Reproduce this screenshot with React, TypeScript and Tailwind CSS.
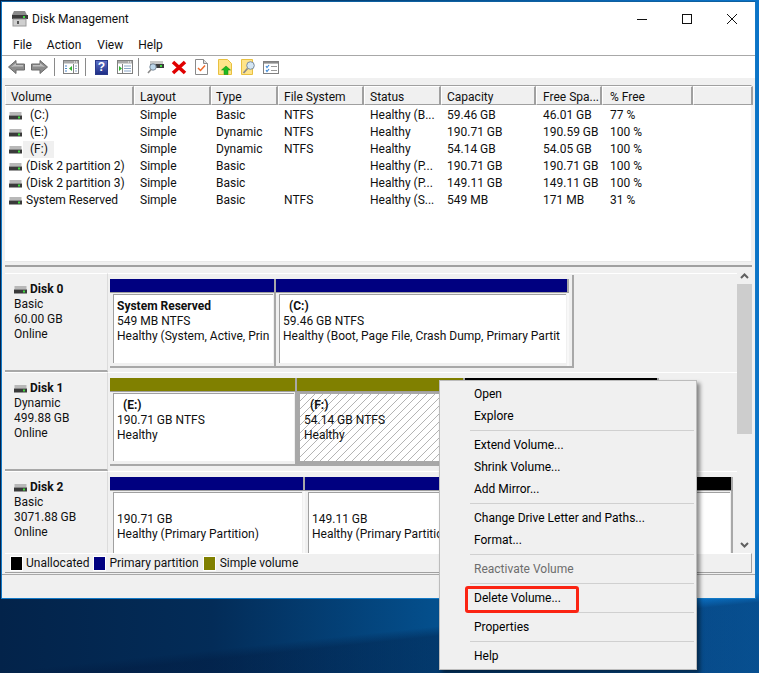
import React from "react";

const cols: [string, number, number][] = [
  ["Volume", 129, 5],
  ["Layout", 77, 5],
  ["Type", 67, 4],
  ["File System", 86, 5],
  ["Status", 77, 5],
  ["Capacity", 95, 5],
  ["Free Spa...", 66, 6],
  ["% Free", 91, 7],
  ["", 60, 5],
];

const rows = [
  [" (C:)", "Simple", "Basic", "NTFS", "Healthy (B...", "59.46 GB", "46.01 GB", "77 %"],
  [" (E:)", "Simple", "Dynamic", "NTFS", "Healthy", "190.71 GB", "190.59 GB", "100 %"],
  [" (F:)", "Simple", "Dynamic", "NTFS", "Healthy", "54.14 GB", "54.05 GB", "100 %"],
  ["(Disk 2 partition 2)", "Simple", "Basic", "", "Healthy (P...", "190.71 GB", "190.71 GB", "100 %"],
  ["(Disk 2 partition 3)", "Simple", "Basic", "", "Healthy (P...", "149.11 GB", "149.11 GB", "100 %"],
  ["System Reserved", "Simple", "Basic", "NTFS", "Healthy (S...", "549 MB", "171 MB", "31 %"],
];

function Drive({ className = "" }: { className?: string }) {
  return (
    <svg width="13" height="8" viewBox="0 0 13 8" className={className}>
      <rect x="0.5" y="0" width="12" height="3.5" fill="#b8b8b8" />
      <rect x="0" y="3.5" width="13" height="4" fill="#3a3a3a" />
      <rect x="9" y="4.5" width="2" height="2" fill="#3fdc3f" />
    </svg>
  );
}

function Sep() {
  return <div className="w-px h-[18px] bg-[#8a8a8a]" />;
}

function Arrow({ flip }: { flip?: boolean }) {
  return (
    <svg width="17" height="14" viewBox="0 0 17 14" className={flip ? "-scale-x-100" : ""}>
      <path d="M0.5 7 L8 0.5 V4 H16.5 V10 H8 V13.5 Z" fill="#8c8c8c" stroke="#6a6a6a" strokeWidth="1" />
      <path d="M3 7 L8 3 V5 H15 V6.5 H6 Z" fill="#c0c0c0" />
    </svg>
  );
}

function PaneIcon({ right }: { right?: boolean }) {
  return (
    <svg width="16" height="14" viewBox="0 0 16 14">
      <rect x="0.5" y="0.5" width="15" height="13" fill="#fff" stroke="#808080" />
      <rect x="1" y="1" width="14" height="2.5" fill="#a8a8a8" />
      <rect x="11" y="1.5" width="1" height="1" fill="#fff" />
      <rect x="13" y="1.5" width="1" height="1" fill="#fff" />
      <path d={right ? "M5.5 4 V13" : "M10.5 4 V13"} stroke="#808080" />
      {right ? (
        <>
          <path d="M2 6 L2 11 L5 8.5 Z" fill="#2fb52f" />
          <path d="M7 6 H14 M7 8.5 H14 M7 11 H14" stroke="#8aa6c8" strokeWidth="1" />
        </>
      ) : (
        <>
          <path d="M2 6 H4 M2 8.5 H4 M2 11 H4" stroke="#4a86c8" />
          <path d="M9 6 L9 11 L6 8.5 Z" fill="#2fb52f" />
          <path d="M12 6 H14 M12 8.5 H14 M12 11 H14" stroke="#8aa6c8" />
        </>
      )}
    </svg>
  );
}

function Toolbar() {
  return (
    <div className="h-[22px] bg-white flex items-center pl-[6px]">
      <div className="flex items-center w-[22px]"><Arrow /></div>
      <div className="flex items-center w-[23px] ml-[1px]"><Arrow flip /></div>
      <Sep />
      <div className="ml-[8px]"><PaneIcon /></div>
      <div className="ml-[6px]"><Sep /></div>
      <div className="ml-[9px] w-[13px] h-[15px] bg-[linear-gradient(#5b6fc4,#1f2f88)] border border-[#2a3a8a] text-white text-[12px] leading-[13px] font-bold text-center [font-family:'Liberation_Sans',sans-serif]">?</div>
      <div className="ml-[9px]"><PaneIcon right /></div>
      <div className="ml-[5px]"><Sep /></div>
      <svg width="17" height="14" viewBox="0 0 17 14" className="ml-[8px]">
        <rect x="3" y="1" width="13" height="3" fill="#c8c8c8" />
        <rect x="3" y="4" width="14" height="4" fill="#3c3c3c" />
        <rect x="13" y="5" width="2" height="2" fill="#3fdc3f" />
        <circle cx="6" cy="7" r="3.2" fill="#bcd6ea" stroke="#7c8c9c" />
        <path d="M4 9.5 L1 13" stroke="#8a8a8a" strokeWidth="1.6" />
      </svg>
      <svg width="16" height="15" viewBox="0 0 16 15" className="ml-[7px]">
        <path d="M2 2 L14 13 M14 2 L2 13" stroke="#e00000" strokeWidth="3.6" />
      </svg>
      <svg width="13" height="16" viewBox="0 0 13 16" className="ml-[8px]">
        <path d="M0.5 0.5 H8.5 L12.5 4.5 V15.5 H0.5 Z" fill="#fff" stroke="#8a8a8a" />
        <path d="M8.5 0.5 V4.5 H12.5" fill="#ddd" stroke="#8a8a8a" />
        <path d="M3 9 L5.5 11.5 L10 6.5" fill="none" stroke="#ee6a2a" strokeWidth="1.5" />
      </svg>
      <svg width="14" height="16" viewBox="0 0 14 16" className="ml-[10px]">
        <path d="M0.5 0.5 H9.5 L13.5 4.5 V15.5 H0.5 Z" fill="#ffe48a" stroke="#e8c040" />
        <path d="M8 7 L12.5 11 H10 V15.5 H6 V11 H3.5 Z" fill="#1fb81f" stroke="#128a12" strokeWidth="0.5" />
      </svg>
      <svg width="15" height="16" viewBox="0 0 15 16" className="ml-[9px]">
        <path d="M0.5 0.5 H11.5 V15.5 H0.5 Z" fill="#ffe48a" stroke="#e8c040" />
        <circle cx="9.5" cy="6.5" r="3.8" fill="#d4e6f4" stroke="#7c8c9c" />
        <path d="M6.5 9.5 L2.5 14" stroke="#8a8a8a" strokeWidth="1.8" />
      </svg>
      <svg width="16" height="13" viewBox="0 0 16 13" className="ml-[7px]">
        <rect x="0.5" y="0.5" width="15" height="12" fill="#fff" stroke="#808080" />
        <rect x="1" y="1" width="14" height="1.6" fill="#8a8a8a" />
        <path d="M3 5 L4 6.5 L6 4 M3 9 L4 10.5 L6 8" fill="none" stroke="#3f8ad8" strokeWidth="1.2" />
        <path d="M8 5.5 H14 M8 9.5 H14" stroke="#9a9a9a" />
      </svg>
    </div>
  );
}

function Cell({
  band,
  width,
  hatch,
  lightSep,
  children,
}: {
  band: string;
  width: string;
  hatch?: boolean;
  lightSep?: boolean;
  children?: React.ReactNode;
}) {
  return (
    <div className={`${width} shrink-0 flex flex-col`}>
      <div className={`h-[13px] shrink-0 ${band} border-r-2 border-r-[#a8a8a8] box-content`} />
      <div className="h-[1px] shrink-0 bg-[#a0a0a0]" />
      <div
        className={`flex-1 min-h-0 overflow-hidden border-r-2 ${lightSep ? "border-r-[#f8f8f8]" : "border-r-[#a8a8a8]"} ${
          hatch
            ? "border-x-[3px] border-t-[2px] border-b-[3px] border-[#a8a8a8]"
            : "pl-[3px] pr-[1px] pt-[1px] pb-[3px]"
        }`}
      >
        <div
          className={`h-full whitespace-nowrap overflow-hidden ${
            hatch
              ? "pl-[4px] bg-[repeating-linear-gradient(135deg,#ffffff_0px,#ffffff_4.6px,#b4b4b4_4.6px,#b4b4b4_5.65px)]"
              : "pl-[3px] bg-white border-l border-t border-[#a0a0a0]"
          }`}
        >
          {children}
        </div>
      </div>
    </div>
  );
}

function CellText({ lines, title }: { lines: string[]; title?: string }) {
  return (
    <div className="leading-[15px] pt-[4px]">
      {title ? <div className="font-bold h-[15px]">{title}</div> : <div className="h-[15px]" />}
      {lines.map((l) => (
        <div key={l} className="h-[15px]">{l}</div>
      ))}
    </div>
  );
}

function DiskRow({
  name,
  lines,
  height,
  last,
  children,
}: {
  name: string;
  lines: string[];
  height: string;
  last?: boolean;
  children: React.ReactNode;
}) {
  return (
    <div className={`${height} flex shrink-0`}>
      <div className={`w-[103px] shrink-0 ${last ? "" : "border-b-2 border-b-[#a8a8a8]"} border-r-[1px] border-r-[#dcdcdc] pl-[9px] pt-[8px] leading-[15px] border-t border-t-white`}>
        <div className="flex items-center gap-[3px] font-bold h-[15px]">
          <Drive />
          <span>{name}</span>
        </div>
        {lines.map((l) => (
          <div key={l}>{l}</div>
        ))}
      </div>
      <div className="flex-1 pl-[2px] pt-[5px] min-w-0 border-t border-t-white overflow-hidden">{children}</div>
    </div>
  );
}

function MenuItem({ label, disabled }: { label: string; disabled?: boolean }) {
  return (
    <div className={`h-[22px] leading-[22px] pl-[34px] ${disabled ? "text-[#6d6d6d]" : "text-[#000]"}`}>{label}</div>
  );
}

function MenuSep() {
  return (
    <div className="h-[7px] flex items-center pl-[30px] pr-[2px]">
      <div className="h-px w-full bg-[#d0d0d0]" />
    </div>
  );
}

export default function App() {
  return (
    <div className="relative w-[759px] h-[673px] overflow-hidden text-[12px] text-[#101010] [font-family:Roboto,sans-serif] bg-[linear-gradient(174deg,rgba(2,24,60,0)_89.3%,rgba(2,24,60,0.4)_90.6%),linear-gradient(90deg,#03234a_0%,#032c58_28%,#04508e_58%,#0a68b8_85%,#0b74c8_100%)]">
      <div className="h-[1px]" />
      {/* window */}
      <div className="ml-[1px] mr-[3px] h-[598px] bg-[#f0f0f0] flex flex-col border border-[#1279c6] border-t-[#0e60a0]">
        {/* title */}
        <div className="h-[33px] bg-white flex items-center shrink-0 pl-[9px]">
          <svg width="18" height="17" viewBox="0 0 18 17">
            <path d="M3 1 H14 L16 5 H1 Z" fill="#8a8a8a" />
            <rect x="1" y="5" width="16" height="4" fill="#3a3a3a" />
            <rect x="12" y="6" width="2" height="2" fill="#3fdc3f" />
            <rect x="2" y="9" width="13" height="7" fill="#cfcfcf" stroke="#9a9a9a" />
            <rect x="6" y="11" width="2" height="3" fill="#555" />
          </svg>
          <span className="ml-[3px]">Disk Management</span>
          <div className="ml-auto flex items-center gap-[33px] mr-[17px]">
            <svg width="12" height="12" viewBox="0 0 12 12"><path d="M1 6.5 H11" stroke="#111" /></svg>
            <svg width="12" height="12" viewBox="0 0 12 12"><rect x="1.5" y="1.5" width="9" height="9" fill="none" stroke="#111" /></svg>
            <svg width="12" height="12" viewBox="0 0 12 12"><path d="M1 1 L11 11 M11 1 L1 11" stroke="#111" /></svg>
          </div>
        </div>
        {/* menu */}
        <div className="h-[20px] bg-white border-b border-[#a8a8a8] flex items-center pl-[11px] gap-[15px] shrink-0 box-content">
          <span>File</span>
          <span>Action</span>
          <span className="ml-[1px]">View</span>
          <span>Help</span>
        </div>
        <Toolbar />
        {/* list */}
        <div className="shrink-0 mt-[7px] mx-[3px] h-[176px] bg-white border-t border-[#a0a0a0] border-r border-r-[#f0f0f0]">
          <div className="flex h-[19px] bg-[#f0f0f0]">
            {cols.map(([name, w, pad]) => (
              <div
                key={name + w}
                style={{ width: w, paddingLeft: pad }}
                className="shrink-0 h-full leading-[19px] pt-[1px] border-r-2 border-b border-r-[#a0a0a0] border-b-[#a0a0a0] border-l border-l-white border-t border-t-white whitespace-nowrap overflow-hidden"
              >
                {name}
              </div>
            ))}
          </div>
          <div className="pt-[2px]">
            {rows.map((r, i) => (
              <div key={i} className="flex h-[17px] leading-[17px]">
                {r.map((c, j) => (
                  <div
                    key={j}
                    style={{ width: cols[j][1], paddingLeft: j === 0 ? 4 : cols[j][2] + 1 }}
                    className={`shrink-0 whitespace-nowrap overflow-hidden ${j === 0 ? "flex items-center" : ""}`}
                  >
                    {j === 0 ? (
                      <>
                        <Drive className="shrink-0" />
                        {c.startsWith(" ") ? (
                          <span className={`ml-[1px] pl-[7px] pr-[6px] ${i === 2 ? "bg-[#f0f0f0]" : ""}`}>{c.trim()}</span>
                        ) : (
                          <span className="ml-[4px]">{c}</span>
                        )}
                      </>
                    ) : (
                      c
                    )}
                  </div>
                ))}
              </div>
            ))}
          </div>
        </div>
        {/* splitter */}
        <div className="shrink-0 h-[6px] mx-[3px] bg-[#f0f0f0] border-t border-[#e8e8e8] border-b-2 border-b-[#a0a0a0]" />
        {/* lower */}
        <div className="shrink-0 h-[286px] mx-[3px] flex">
          <div className="w-[732px] shrink-0 overflow-hidden pt-[6px] flex flex-col">
            <DiskRow name="Disk 0" lines={["Basic", "60.00 GB", "Online"]} height="h-[99px]">
              <div className="flex h-[87px] w-[462px] border-r-2 border-b-2 border-[#a8a8a8] -mt-[4px] pt-[4px] box-content">
                <Cell band="bg-[#000080]" width="w-[166px]">
                  <CellText title="System Reserved" lines={["549 MB NTFS", "Healthy (System, Active, Prin"]} />
                </Cell>
                <Cell band="bg-[#000080]" width="w-[293px]" lightSep>
                  <CellText title={"\u00A0\u00A0(C:)"} lines={["59.46 GB NTFS", "Healthy (Boot, Page File, Crash Dump, Primary Partit"]} />
                </Cell>
              </div>
            </DiskRow>
            <DiskRow name="Disk 1" lines={["Dynamic", "499.88 GB", "Online"]} height="h-[99px]">
              <div className="flex h-[88px] border-b-2 border-[#a8a8a8] w-[552px]">
                <Cell band="bg-[#808000]" width="w-[187px]">
                  <CellText title={"\u00A0\u00A0(E:)"} lines={["190.71 GB NTFS", "Healthy"]} />
                </Cell>
                <Cell band="bg-[#808000]" width="w-[168px]" hatch>
                  <CellText title={"\u00A0\u00A0(F:)"} lines={["54.14 GB NTFS", "Healthy"]} />
                </Cell>
                <Cell band="bg-[#000000]" width="w-[194px]" />
              </div>
            </DiskRow>
            <DiskRow name="Disk 2" lines={["Basic", "3071.88 GB", "Online"]} height="h-[82px]" last>
              <div className="flex">
                <Cell band="bg-[#000080]" width="w-[195px]" lightSep>
                  <div className="h-[76px]">
                    <CellText lines={["190.71 GB", "Healthy (Primary Partition)"]} />
                  </div>
                </Cell>
                <Cell band="bg-[#000080]" width="w-[192px]" lightSep>
                  <div className="h-[76px]">
                    <CellText lines={["149.11 GB", "Healthy (Primary Partition)"]} />
                  </div>
                </Cell>
                <Cell band="bg-[#000000]" width="w-[236px]">
                  <div className="h-[76px]" />
                </Cell>
              </div>
            </DiskRow>
          </div>
          <div className="w-[15px] shrink-0 bg-[#f0f0f0] flex flex-col items-center">
            <div className="h-[17px] flex items-center justify-center">
              <svg width="9" height="6" viewBox="0 0 9 6"><path d="M1 5 L4.5 1.5 L8 5" fill="none" stroke="#606060" strokeWidth="2" /></svg>
            </div>
            <div className="w-full h-[150px] bg-[#cdcdcd]" />
            <div className="flex-1" />
            <div className="h-[17px] flex items-center justify-center">
              <svg width="9" height="6" viewBox="0 0 9 6"><path d="M1 1 L4.5 4.5 L8 1" fill="none" stroke="#606060" strokeWidth="2" /></svg>
            </div>
          </div>
        </div>
        {/* legend */}
        <div className="shrink-0 h-[20px] mx-[3px] border-b border-r border-[#a0a0a0] border-t border-t-white flex items-center pl-[5px] bg-[#f0f0f0]">
          <div className="w-[11px] h-[13px] bg-black border border-white box-content" />
          <span className="ml-[3px]">Unallocated</span>
          <div className="ml-[4px] w-[11px] h-[13px] bg-[#000080] border border-white box-content" />
          <span className="ml-[3px]">Primary partition</span>
          <div className="ml-[4px] w-[11px] h-[13px] bg-[#808000] border border-white box-content" />
          <span className="ml-[4px]">Simple volume</span>
        </div>
        <div className="flex-1 mt-[1px] border-t border-[#a8a8a8]" />
      </div>
      {/* context menu */}
      <div className="absolute left-[439px] top-[380px] w-[258px] h-[290px] bg-[#f0f0f0] border border-[#bcbcbc] shadow-[3px_3px_4px_rgba(0,0,0,0.45)] py-[2px] text-[12px]">
        <MenuItem label="Open" />
        <MenuItem label="Explore" />
        <MenuSep />
        <MenuItem label="Extend Volume..." />
        <MenuItem label="Shrink Volume..." />
        <MenuItem label="Add Mirror..." />
        <MenuSep />
        <MenuItem label="Change Drive Letter and Paths..." />
        <MenuItem label="Format..." />
        <MenuSep />
        <MenuItem label="Reactivate Volume" disabled />
        <MenuSep />
        <MenuItem label="Delete Volume..." />
        <MenuSep />
        <MenuItem label="Properties" />
        <MenuSep />
        <MenuItem label="Help" />
      </div>
      <div className="absolute left-[465px] top-[586px] w-[114px] h-[27px] border-[3px] border-[#fb2413] rounded-[3px]" />
    </div>
  );
}
